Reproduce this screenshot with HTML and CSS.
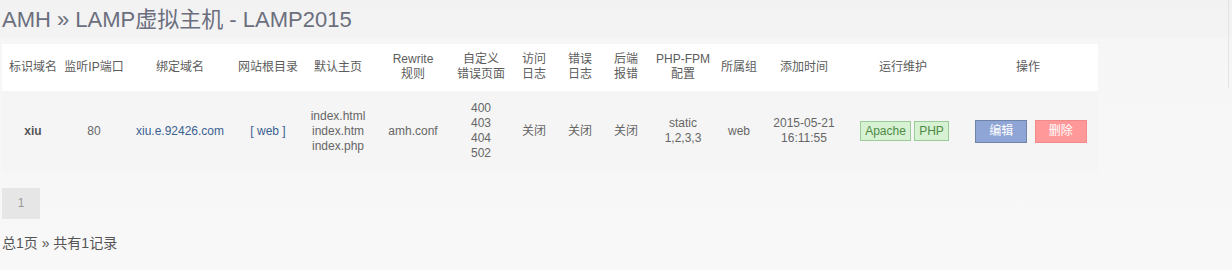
FILE: index.html
```html
<!DOCTYPE html>
<html lang="zh-CN">
<head>
    <meta charset="UTF-8">
    <title>AMH » LAMP虚拟主机 - LAMP2015</title>
    <link rel="stylesheet" href="styles.css">
</head>
<body>
    <div class="side-line"></div>
    <h1 class="title">AMH » LAMP虚拟主机 - LAMP2015</h1>

    <table class="list">
        <colgroup>
            <col class="c-name"><col class="c-port"><col class="c-domain"><col class="c-root">
            <col class="c-index"><col class="c-rewrite"><col class="c-error"><col class="c-log">
            <col class="c-errlog"><col class="c-backend"><col class="c-fpm"><col class="c-group">
            <col class="c-time"><col class="c-run"><col class="c-action">
        </colgroup>
        <thead>
            <tr>
                <th>标识域名</th>
                <th>监听IP端口</th>
                <th>绑定域名</th>
                <th>网站根目录</th>
                <th>默认主页</th>
                <th>Rewrite<br>规则</th>
                <th>自定义<br>错误页面</th>
                <th>访问<br>日志</th>
                <th>错误<br>日志</th>
                <th>后端<br>报错</th>
                <th>PHP-FPM<br>配置</th>
                <th>所属组</th>
                <th>添加时间</th>
                <th>运行维护</th>
                <th>操作</th>
            </tr>
        </thead>
        <tbody>
            <tr>
                <td><b>xiu</b></td>
                <td>80</td>
                <td><a href="#" class="link">xiu.e.92426.com</a></td>
                <td><a href="#" class="link">[ web ]</a></td>
                <td>index.html<br>index.htm<br>index.php</td>
                <td>amh.conf</td>
                <td>400<br>403<br>404<br>502</td>
                <td>关闭</td>
                <td>关闭</td>
                <td>关闭</td>
                <td>static<br>1,2,3,3</td>
                <td>web</td>
                <td>2015-05-21<br>16:11:55</td>
                <td class="run">
                    <span class="tag">Apache</span>
                    <span class="tag">PHP</span>
                </td>
                <td class="action">
                    <a href="#" class="btn btn-edit">编辑</a>
                    <a href="#" class="btn btn-del">删除</a>
                </td>
            </tr>
        </tbody>
    </table>

    <div class="pager">
        <span class="page-cur">1</span>
    </div>
    <p class="total">总1页 » 共有1记录</p>
</body>
</html>
```

FILE: styles.css
```css
* {
    margin: 0;
    padding: 0;
    box-sizing: border-box;
}

body {
    font-family: "Liberation Sans", Arial, "Noto Sans CJK SC", sans-serif;
    font-size: 12px;
    color: #666;
    background: linear-gradient(#f2f2f2 0, #f3f3f3 38px, #f6f6f6 40px, #f8f8f8 100%);
    min-height: 270px;
    padding: 0 2px;
    position: relative;
}

.side-line {
    position: absolute;
    top: 0;
    left: 1228px;
    width: 1px;
    height: 88px;
    background-color: #e4e4e4;
}

.title {
    font-size: 22px;
    font-weight: normal;
    color: #6b6e7d;
    height: 44px;
    line-height: 40px;
}

.list {
    width: 1096px;
    table-layout: fixed;
    border-collapse: collapse;
}

.list th {
    background-color: #fff;
    color: #5c5c5c;
    font-weight: normal;
    line-height: 15px;
    padding: 8px 0 9px;
    text-align: center;
    white-space: nowrap;
}

.list td {
    background-color: #f5f5f5;
    line-height: 15px;
    padding: 10px 0 11px;
    text-align: center;
    white-space: nowrap;
}

.list td.run {
    padding-left: 3px;
}

.list td.action {
    padding-left: 6px;
}

.list b {
    color: #555;
}

.c-name { width: 62px; }
.c-port { width: 60px; }
.c-domain { width: 112px; }
.c-root { width: 64px; }
.c-index { width: 76px; }
.c-rewrite { width: 74px; }
.c-error { width: 62px; }
.c-log { width: 44px; }
.c-errlog { width: 48px; }
.c-backend { width: 44px; }
.c-fpm { width: 70px; }
.c-group { width: 42px; }
.c-time { width: 88px; }
.c-run { width: 110px; }
.c-action { width: 140px; }

.link {
    color: #3a6190;
    text-decoration: none;
}

.tag {
    display: inline-block;
    height: 20px;
    line-height: 18px;
    padding: 0 4px;
    border: 1px solid #99cc99;
    background-color: #d6f2d2;
    color: #4f8a45;
}

.btn {
    display: inline-block;
    width: 52px;
    height: 23px;
    line-height: 21px;
    color: #fff;
    text-decoration: none;
    margin: 0 2px;
}

.btn-edit {
    background-color: #8fa5d6;
    border: 1px solid #7083a8;
}

.btn-del {
    background-color: #ff9999;
    border: 1px solid #f08a8a;
}

.pager {
    margin-top: 16px;
    height: 31px;
}

.page-cur {
    display: inline-block;
    width: 38px;
    height: 31px;
    line-height: 31px;
    text-align: center;
    background-color: #e6e6e6;
    color: #999;
}

.total {
    font-size: 14px;
    color: #555;
    margin-top: 15px;
    line-height: 18px;
}
```
